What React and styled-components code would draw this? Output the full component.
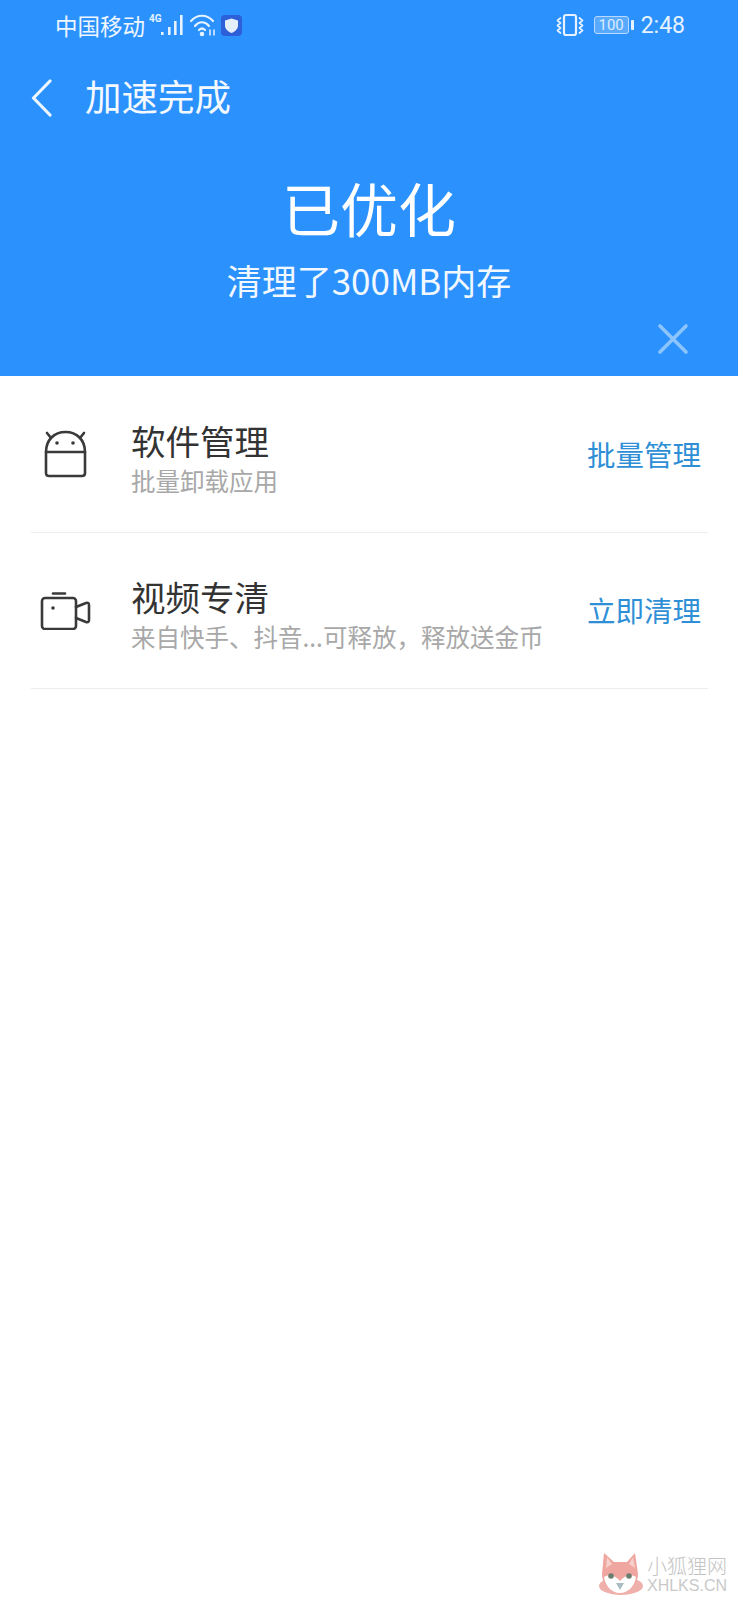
import React from "react";
import styled, {createGlobalStyle} from "styled-components";

const FONT = `"Noto Sans CJK SC", "Noto Sans", sans-serif`;

const GlobalStyle = createGlobalStyle`
  html, body {
    margin: 0;
    padding: 0;
    background: #fff;
    font-family: ${FONT};
  }
  * {
    box-sizing: border-box;
  }
`;

const Page = styled.div`
  position: relative;
  width: 738px;
  height: 1600px;
  background: #fff;
  overflow: hidden;
`;

const Header = styled.header`
  height: 376px;
  background: #2b92fd;
  color: #fff;
  display: flex;
  flex-direction: column;
`;

const StatusBar = styled.div`
  height: 50px;
  padding: 0 53px 0 55px;
  display: flex;
  align-items: center;
  justify-content: space-between;
`;

const StatusGroup = styled.div`
  display: flex;
  align-items: center;
`;

const StatusSvg = styled.svg`
  display: block;
  margin-left: ${p => p.$gap || 0}px;
`;

const Carrier = styled.span`
  font-size: 22.5px;
  line-height: 48px;
  font-weight: 400;
  color: #eef6ff;
`;

const Clock = styled.span`
  font-family: Roboto, sans-serif;
  font-size: 23px;
  margin-left: 12px;
  color: #e6f2ff;
`;

const Battery = styled.div`
  position: relative;
  width: 35px;
  height: 18px;
  margin-left: 10px;
  border: 1px solid #b9d9ff;
  border-radius: 3px;
  background: rgba(255, 255, 255, 0.22);
  font-family: Roboto, sans-serif;
  font-size: 15px;
  line-height: 16px;
  text-align: center;
  color: #dcecff;

  &::after {
    content: "";
    position: absolute;
    right: -6px;
    top: 3px;
    width: 3px;
    height: 10px;
    background: #e6f2ff;
    border-radius: 1px;
  }
`;

const NavBar = styled.div`
  height: 96px;
  padding-left: 31px;
  display: flex;
  align-items: center;
  gap: 32px;
`;

const NavTitle = styled.h1`
  margin: 0 0 4px;
  font-size: 36.5px;
  line-height: 44px;
  font-weight: 400;
  color: #f4f9ff;
`;

const Result = styled.div`
  display: flex;
  flex-direction: column;
  align-items: center;
`;

const ResultTitle = styled.div`
  font-size: 58px;
  line-height: 76px;
  margin-top: 23px;
  font-weight: 400;
`;

const ResultText = styled.div`
  font-size: 35px;
  line-height: 44px;
  margin-top: 13px;
  font-weight: 400;
  color: #f2f8ff;
`;

const CloseRow = styled.div`
  display: flex;
  justify-content: flex-end;
  padding-right: 49px;
  margin-top: 21px;
`;

const List = styled.div`
  display: flex;
  flex-direction: column;
`;

const Row = styled.div`
  height: 156.5px;
  margin: 0 30px 0 31px;
  display: flex;
  align-items: center;
  border-bottom: 1px solid #ececec;
`;

const RowIcon = styled.div`
  width: 100px;
  padding-left: 9px;
  display: flex;
  align-items: center;
`;

const RowBody = styled.div`
  flex: 1;
  padding-top: 8px;
  display: flex;
  flex-direction: column;
`;

const RowTitle = styled.div`
  font-size: 34.5px;
  line-height: 44px;
  color: #333;
  font-weight: 400;
`;

const RowSub = styled.div`
  font-size: 24.5px;
  line-height: 34px;
  color: #a8a8a8;
  margin-top: 2px;
`;

const RowAction = styled.div`
  font-size: 28.5px;
  line-height: 40px;
  color: #2f8fd6;
  margin-right: 7px;
`;

const Watermark = styled.div`
  position: absolute;
  right: 11px;
  bottom: 4px;
  display: flex;
  align-items: center;
  gap: 4px;
`;

const WatermarkText = styled.div`
  display: flex;
  flex-direction: column;
  gap: 3px;
`;

const WatermarkName = styled.div`
  font-size: 20px;
  line-height: 20px;
  font-weight: 300;
  color: #c4c4c4;
`;

const WatermarkUrl = styled.div`
  font-family: "Liberation Sans", sans-serif;
  font-size: 16px;
  line-height: 14px;
  color: #c9c9c9;
`;

const SignalIcon = () => (
  <StatusSvg $gap={4} width="36" height="24" viewBox="0 0 36 24" fill="none">
    <text x="0" y="9" fontFamily="Roboto, sans-serif" fontSize="10" fontWeight="700" fill="#e6f2ff">4G</text>
    <g fill="#e6f2ff">
      <rect x="12" y="19" width="2.6" height="3" />
      <rect x="19" y="14" width="2.6" height="8" />
      <rect x="25" y="8" width="2.6" height="14" />
      <rect x="31" y="2" width="2.6" height="20" />
    </g>
  </StatusSvg>
);

const WifiIcon = () => (
  <StatusSvg $gap={4} width="27" height="24" viewBox="0 0 27 24" fill="none" stroke="#e6f2ff" strokeWidth="2.2" strokeLinecap="round">
    <path d="M2 8 C8 1 18 1 24 8" />
    <path d="M6 13 C10 8 16 8 20 13" />
    <path d="M10 17 C12 15 14 15 16 17" />
    <circle cx="13" cy="21" r="1.2" fill="#e6f2ff" />
    <path d="M21 17 V22 M25 17 V22" strokeWidth="1.5" />
  </StatusSvg>
);

const ShieldIcon = () => (
  <StatusSvg $gap={5} width="21" height="21" viewBox="0 0 21 21">
    <rect width="21" height="21" rx="4" fill="#2c5fd8" />
    <path d="M10.5 3.5 L17 5.5 V10.5 C17 14 14 16.5 10.5 18 C7 16.5 4 14 4 10.5 V5.5 Z" fill="#e4eefc" />
  </StatusSvg>
);

const VibrateIcon = () => (
  <StatusSvg width="28" height="24" viewBox="0 0 28 24" fill="none" stroke="#e6f2ff" strokeLinecap="round" strokeLinejoin="round">
    <rect x="8" y="2" width="12" height="20" rx="2" strokeWidth="2.2" />
    <path d="M4.5 5 L1.5 7.5 L4.5 10 L1.5 12.5 L4.5 15 L1.5 17.5 L4.5 20" strokeWidth="1.7" />
    <path d="M23.5 5 L26.5 7.5 L23.5 10 L26.5 12.5 L23.5 15 L26.5 17.5 L23.5 20" strokeWidth="1.7" />
  </StatusSvg>
);

const BackIcon = () => (
  <svg width="22" height="38" viewBox="0 0 22 38" fill="none" stroke="#eef6ff" strokeWidth="3.2" strokeLinecap="round" strokeLinejoin="round">
    <path d="M19 2 L2.5 19 L19 36" />
  </svg>
);

const CloseIcon = () => (
  <svg width="32" height="32" viewBox="0 0 32 32" fill="none" stroke="#8cc4fd" strokeWidth="3.6" strokeLinecap="round">
    <path d="M3 3 L29 29 M29 3 L3 29" />
  </svg>
);

const AndroidIcon = () => (
  <svg width="52" height="50" viewBox="-4 0 52 50" fill="none" stroke="#3a3a3a" strokeWidth="2.6" strokeLinecap="round" strokeLinejoin="round">
    <path d="M2 23 C2 11 10 3 21.5 3 C33 3 41 11 41 23" />
    <path d="M2 23 H41 V44 C41 46 40 47 38 47 H5 C3 47 2 46 2 44 Z" />
    <path d="M3 4 L7 9 M40 4 L36 9" />
    <circle cx="13" cy="14" r="1.8" fill="#3a3a3a" stroke="none" />
    <circle cx="29" cy="14" r="1.8" fill="#3a3a3a" stroke="none" />
  </svg>
);

const CameraIcon = () => (
  <svg width="52" height="40" viewBox="0 -2 52 40" fill="none" stroke="#3a3a3a" strokeWidth="2.6" strokeLinecap="round" strokeLinejoin="round">
    <path d="M13 1.5 H25" />
    <rect x="2" y="6" width="34" height="31" rx="3" />
    <path d="M36 15 L46 11 Q49 10 49 13 V28 Q49 31 46 30 L36 26" />
    <circle cx="13" cy="16" r="1.8" fill="#3a3a3a" stroke="none" />
  </svg>
);

const FoxLogo = () => (
  <svg width="44" height="44" viewBox="0 0 44 44">
    <ellipse cx="22" cy="34" rx="22" ry="9" fill="#efb0ac" />
    <path d="M5 1 L15 10 H28 L36 1 L39 22 C39 33 30 40 21 40 C12 40 3 33 3 22 Z" fill="#efa5a0" />
    <path d="M8 5 L13 12 L7 16 Z M34 5 L30 12 L36 16 Z" fill="#f7cfcb" />
    <path d="M5 25 C11 21 17 24 21 29 C25 24 31 21 37 25 C36 34 29 41 21 41 C13 41 6 34 5 25 Z" fill="#fff" />
    <circle cx="12" cy="24" r="2.8" fill="#6b7d6e" />
    <circle cx="30" cy="24" r="2.8" fill="#6b7d6e" />
    <path d="M17 31 H25 L21 38 Z" fill="#a9bcc2" />
  </svg>
);

const rows = [
  {icon: <AndroidIcon />, title: "软件管理", sub: "批量卸载应用", action: "批量管理"},
  {icon: <CameraIcon />, title: "视频专清", sub: "来自快手、抖音...可释放，释放送金币", action: "立即清理"},
];

const App = () => (
  <Page>
    <GlobalStyle />
    <Header>
      <StatusBar>
        <StatusGroup>
          <Carrier>中国移动</Carrier>
          <SignalIcon />
          <WifiIcon />
          <ShieldIcon />
        </StatusGroup>
        <StatusGroup>
          <VibrateIcon />
          <Battery>100</Battery>
          <Clock>2:48</Clock>
        </StatusGroup>
      </StatusBar>
      <NavBar>
        <BackIcon />
        <NavTitle>加速完成</NavTitle>
      </NavBar>
      <Result>
        <ResultTitle>已优化</ResultTitle>
        <ResultText>清理了300MB内存</ResultText>
      </Result>
      <CloseRow>
        <CloseIcon />
      </CloseRow>
    </Header>
    <List>
      {rows.map(row => (
        <Row key={row.title}>
          <RowIcon>{row.icon}</RowIcon>
          <RowBody>
            <RowTitle>{row.title}</RowTitle>
            <RowSub>{row.sub}</RowSub>
          </RowBody>
          <RowAction>{row.action}</RowAction>
        </Row>
      ))}
    </List>
    <Watermark>
      <FoxLogo />
      <WatermarkText>
        <WatermarkName>小狐狸网</WatermarkName>
        <WatermarkUrl>XHLKS.CN</WatermarkUrl>
      </WatermarkText>
    </Watermark>
  </Page>
);

export default App;
